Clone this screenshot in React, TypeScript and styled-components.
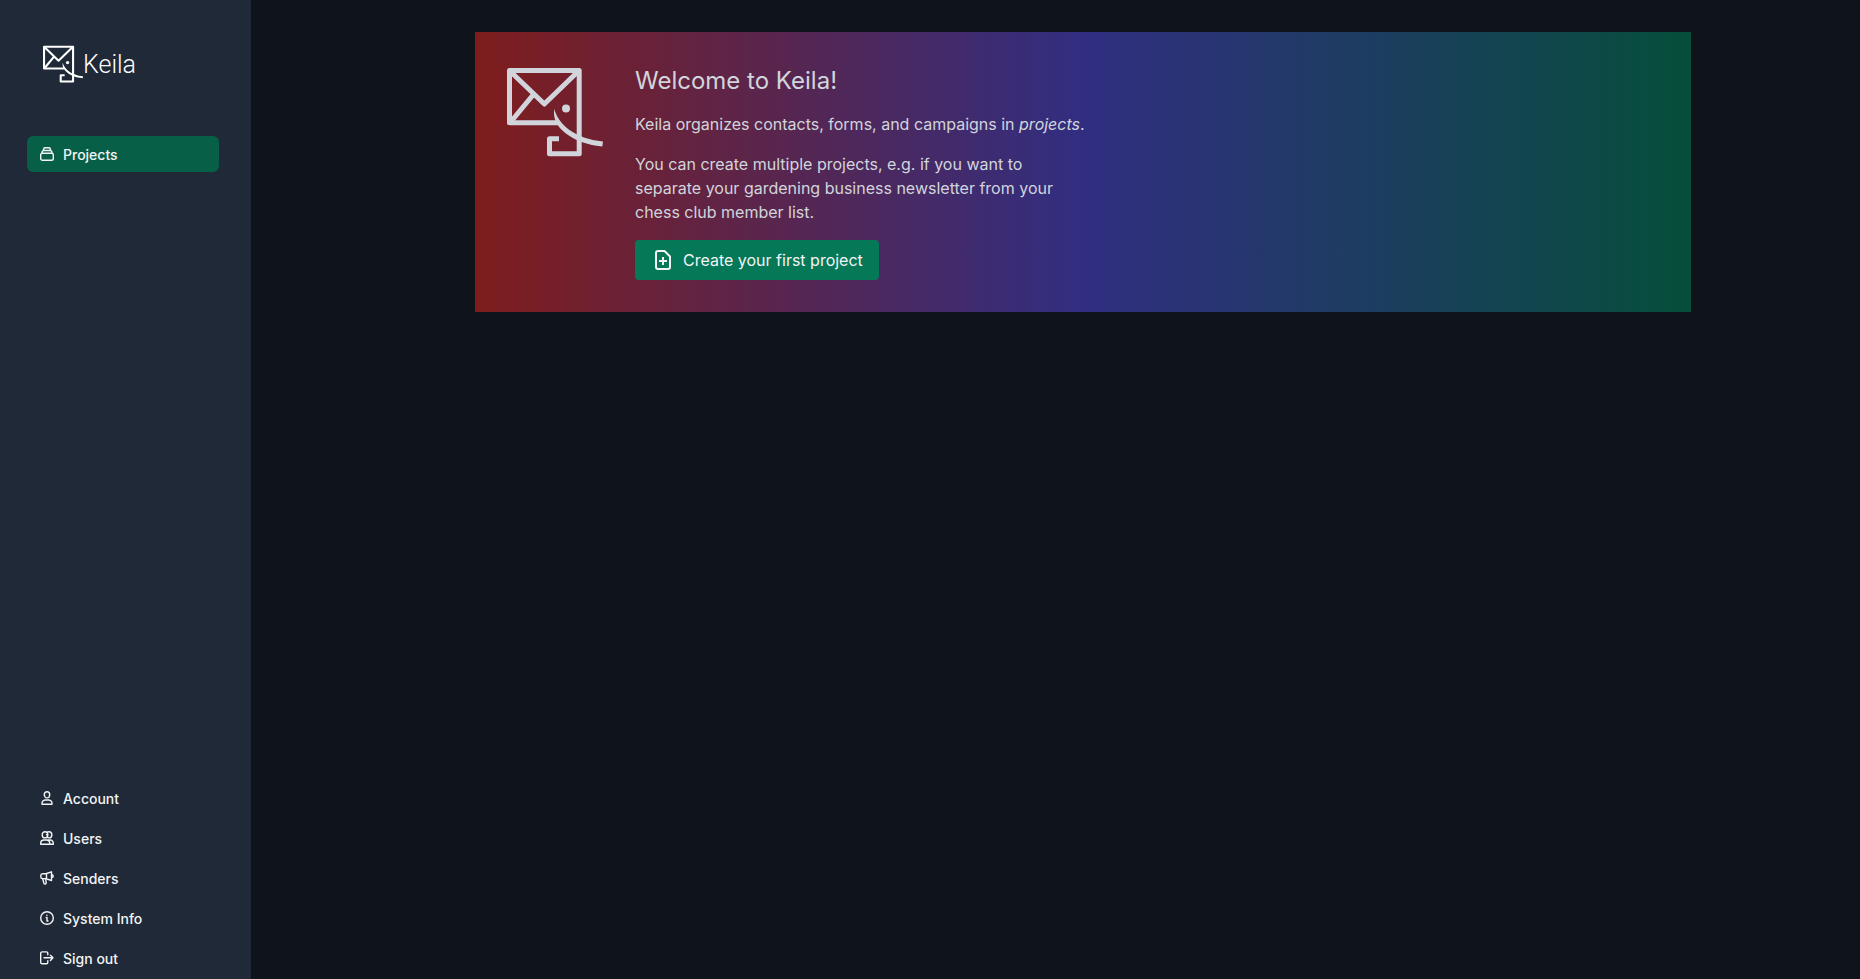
import React from "react";
import styled, { createGlobalStyle } from "styled-components";

const GlobalStyle = createGlobalStyle`
  *, *::before, *::after { box-sizing: border-box; }
  body {
    margin: 0;
    background: #0f141a;
    color: #d1d5db;
    font-family: Inter, "Liberation Sans", sans-serif;
    font-size: 16px;
    line-height: 24px;
  }
  h1, p, ul { margin: 0; padding: 0; }
`;

const Layout = styled.div`
  display: flex;
  min-height: 100vh;
`;

const Sidebar = styled.aside`
  display: flex;
  flex-direction: column;
  justify-content: space-between;
  flex: none;
  width: 251px;
  padding: 44px 32px 3px 27px;
  background: #1f2937;
`;

const Brand = styled.a`
  display: flex;
  align-items: center;
  height: 40px;
  margin-bottom: 52px;
  padding-left: 16px;
  color: #ffffff;
  font-family: Roboto, sans-serif;
  font-size: 25px;
  font-weight: 300;
  text-decoration: none;
`;

const Label = styled.span`
  padding-top: 2px;
`;

const NavList = styled.ul`
  display: flex;
  flex-direction: column;
  gap: 4px;
  list-style: none;
`;

const NavLink = styled.a<{ $active?: boolean }>`
  display: flex;
  align-items: center;
  gap: 9px;
  height: 36px;
  padding: 0 13px;
  border-radius: 6px;
  background: ${(p) => (p.$active ? "#065f46" : "transparent")};
  color: #f3f4f6;
  font-size: 14px;
  font-weight: 500;
  line-height: 20px;
  text-decoration: none;
`;

const Main = styled.main`
  flex: 1;
  padding: 32px 32px 32px 87px;
`;

const Banner = styled.section`
  display: flex;
  align-items: flex-start;
  gap: 32px;
  max-width: 1216px;
  margin: 0 auto;
  padding: 32px;
  background: linear-gradient(to right, #7f1d1d, #312e81, #064e3b);
`;

const BannerText = styled.div`
  display: flex;
  flex-direction: column;
  align-items: flex-start;
  gap: 16px;
  max-width: 456px;
`;

const Title = styled.h1`
  padding-top: 2px;
  font-size: 24px;
  font-weight: 400;
  line-height: 30px;
`;

const CreateButton = styled.button`
  display: flex;
  align-items: center;
  gap: 8px;
  height: 40px;
  padding: 0 16px;
  border: 0;
  border-radius: 4px;
  background: #047857;
  color: #f3f4f6;
  font: inherit;
  cursor: pointer;
`;

const Elephant = ({ size }: { size: number }) => (
  <svg width={size} height={size} viewBox="0 0 96 96" fill="none" stroke="currentColor" strokeWidth="5" strokeLinejoin="round" aria-hidden="true">
    <path d="M51 58.7H2.5V6.5H72.2V89.8H42.5V74.8H52" />
    <path d="M4.5 8.5 37.3 40 70 8.5M26 31 4.500 57" />
    <path d="M47.3 45C51 60 68 75 96 77.400L95.300 82.400C75 81 56 71 49.500 59C47 54 46.500 49 47.300 45Z" fill="currentColor" stroke="none" />
    <circle cx="59" cy="44.500" r="4" fill="currentColor" stroke="none" />
  </svg>
);

const Icon = ({ children }: { children: React.ReactNode }) => (
  <svg width="14" height="14" viewBox="0 0 14 14" fill="none" stroke="currentColor" strokeWidth="1.4" strokeLinecap="round" strokeLinejoin="round" aria-hidden="true">
    {children}
  </svg>
);

const footerItems = [
  {
    label: "Account",
    icon: (
      <>
        <path d="M7 .7c1.700 0 2.700 1.200 2.700 2.800S8.700 6.900 7 6.900 4.300 5.100 4.300 3.500 5.300.7 7 .7Z" />
        <path d="M2 13.300h10v-1c0-2-2-3.300-3.400-3.300H5.400C4 9 2 10.300 2 12.300Z" />
      </>
    ),
  },
  {
    label: "Users",
    icon: (
      <>
        <path d="M5 .8C6.900.8 7.800 2 7.800 3.700S6.700 6.900 5 6.900 2.200 5.300 2.200 3.700 3.100.8 5 .8Z" />
        <path d="M7 1.300C7.500.9 8.200.8 9 .8c1.900 0 2.800 1.200 2.800 2.900S10.700 6.900 9 6.900C8.200 6.900 7.600 6.600 7 6.200M6.500 3.700H7.500" />
        <path d="M.7 13.300h9v-1C9.700 10.300 8.200 9 6.500 9h-2.500C2.200 9 .7 10.300.7 12.300ZM9.700 13.300h3.600v-1C13.300 10.300 12 9 10.200 9H7.800" />
      </>
    ),
  },
  {
    label: "Senders",
    icon: (
      <>
        <path d="M.8 4.500C.8 3.400 1.500 2.700 2.500 2.700L6.500 2.500 11.500.8V9.500L6.500 7.800 2.500 7.600C1.500 7.600.8 6.900.8 5.800ZM6.500 2.500V7.800M11.500 3.800c2.300 0 2.300 2.800 0 2.800" />
        <path d="M2.700 7.700 4 12.500C4.300 13.400 6.400 13.300 6.100 12L5.800 7.800" />
      </>
    ),
  },
  {
    label: "System Info",
    icon: (
      <>
        <circle cx="7" cy="7" r="6.300" />
        <path d="M6.200 6.500H7V10H8M6.900 4.200H7" />
      </>
    ),
  },
  {
    label: "Sign out",
    icon: (
      <path d="M7.800 3.800V2.200C7.800 1.400 7.200.9 6.400.9H2.200C1.300.9.7 1.400.7 2.200V11.400C.7 12.200 1.300 12.700 2.200 12.700H6.400C7.200 12.700 7.800 12.200 7.800 11.400V9.800M4 6.800H13M10.400 4.200 13 6.800 10.400 9.400" />
    ),
  },
];

export default function App() {
  return (
    <>
      <GlobalStyle />
      <Layout>
        <Sidebar>
          <nav aria-label="Main">
            <Brand href="#">
              <Elephant size={40} />
              <Label>Keila</Label>
            </Brand>
            <NavList>
              <li>
                <NavLink href="#projects" $active>
                  <Icon>
                    <path d="M2.300 6.300h9.400c1 0 1.600.6 1.600 1.500v3.700c0 1.100-.7 1.800-1.800 1.800h-9C1.400 13.300.7 12.600.7 11.500V7.800c0-.9.6-1.500 1.600-1.500Z" />
                    <path d="M2 6.300C2 4.500 2.500 3.500 3.700 3.500h6.600C11.500 3.500 12 4.500 12 6.300M3.500 3.500C3.500 1.800 4 .8 5 .8h4c1 0 1.500 1 1.500 2.700" />
                  </Icon>
                  <Label>Projects</Label>
                </NavLink>
              </li>
            </NavList>
          </nav>
          <nav aria-label="Account and system">
            <NavList>
              {footerItems.map((item) => (
                <li key={item.label}>
                  <NavLink href="#">
                    <Icon>{item.icon}</Icon>
                    <Label>{item.label}</Label>
                  </NavLink>
                </li>
              ))}
            </NavList>
          </nav>
        </Sidebar>
        <Main>
          <Banner>
            <Elephant size={96} />
            <BannerText>
              <Title>Welcome to Keila!</Title>
              <p>
                Keila organizes contacts, forms, and campaigns in <em>projects</em>.
              </p>
              <p>
                You can create multiple projects, e.g. if you want to separate your gardening
                business newsletter from your chess club member list.
              </p>
              <CreateButton type="button">
                <svg width="24" height="24" viewBox="0 0 24 24" fill="none" stroke="currentColor" strokeWidth="2" strokeLinejoin="round" aria-hidden="true">
                  <path d="M13.500 3H7C5.700 3 5 3.700 5 5v14c0 1.300.7 2 2 2h10c1.300 0 2-.7 2-2V8.500ZM8 13h8M12 9v8" />
                </svg>
                Create your first project
              </CreateButton>
            </BannerText>
          </Banner>
        </Main>
      </Layout>
    </>
  );
}
